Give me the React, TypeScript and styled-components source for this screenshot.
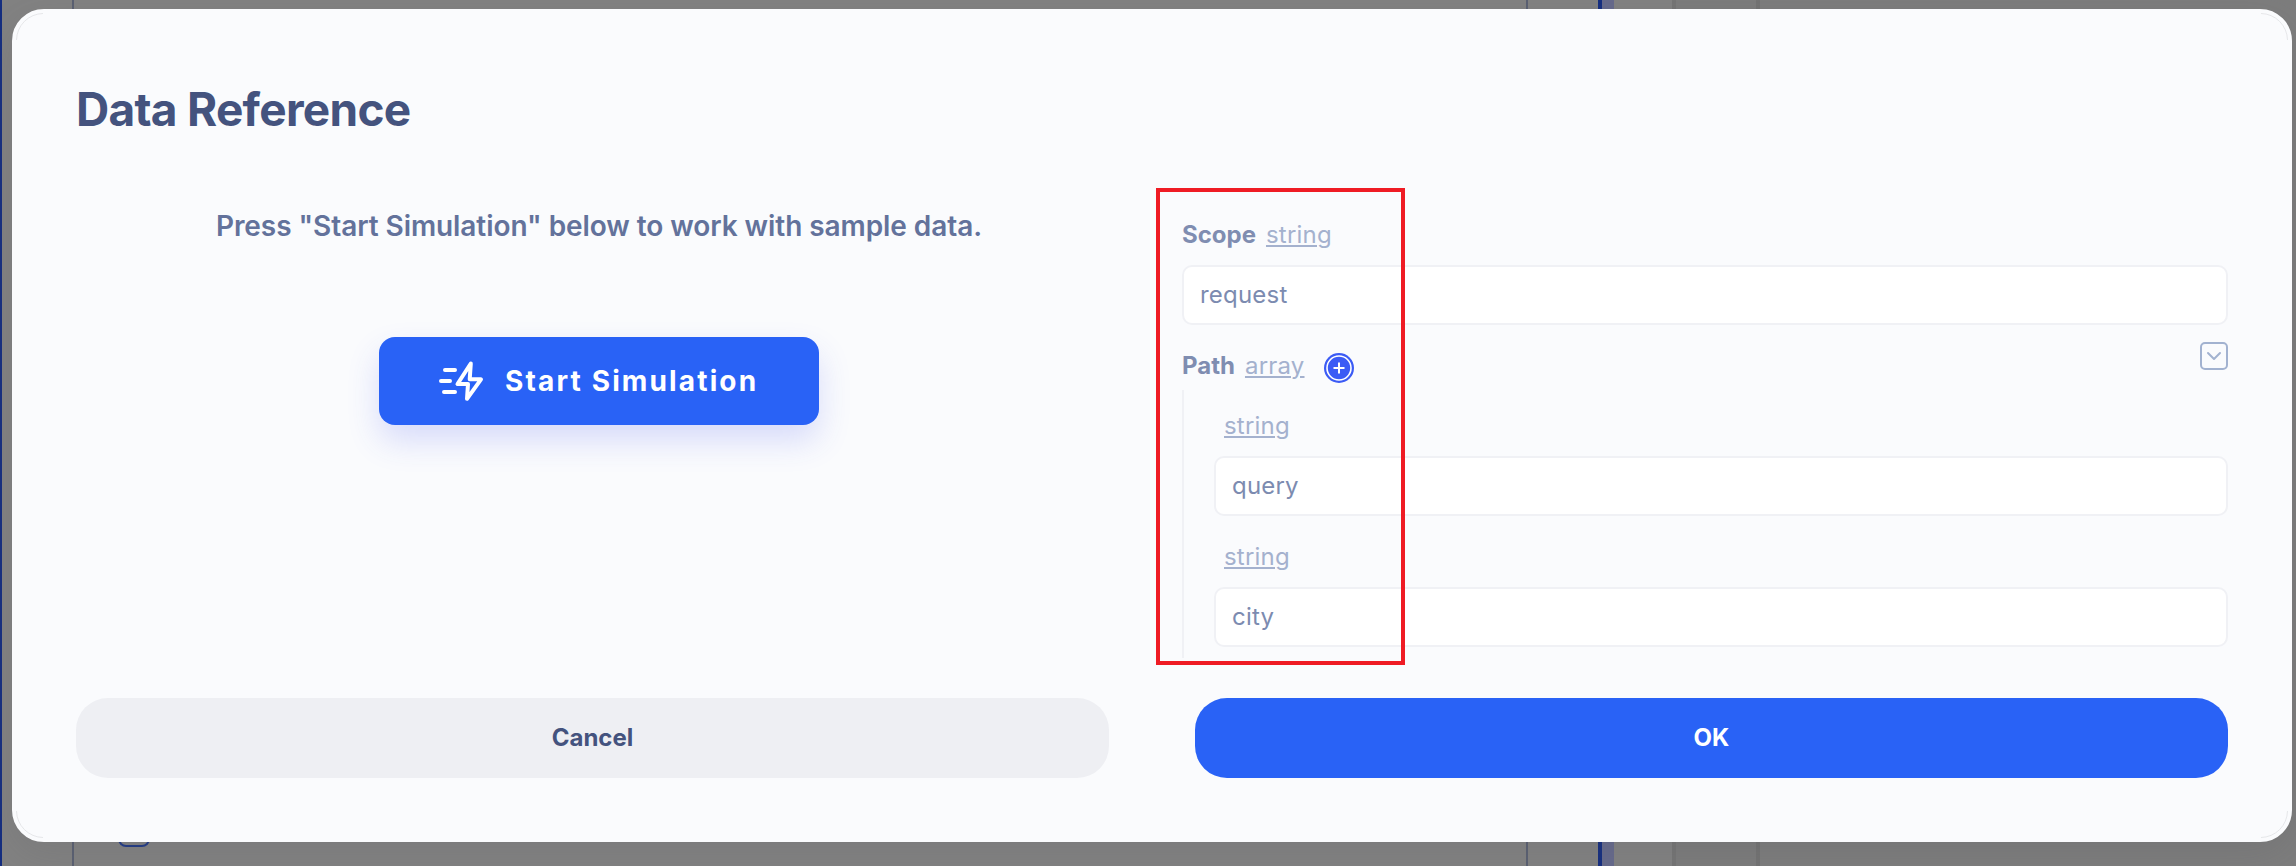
import React from "react";
import styled, { createGlobalStyle } from "styled-components";

const GlobalStyle = createGlobalStyle`
  *, *::before, *::after { box-sizing: border-box; }
  body { margin: 0; font-family: Inter, "Liberation Sans", sans-serif; }
  button { font-family: inherit; border: 0; cursor: pointer; }
`;

const Screen = styled.div`
  position: relative;
  width: 2296px;
  height: 866px;
  overflow: hidden;
`;

const Backdrop = styled.div`
  display: flex;
  height: 100%;
  background: #828282;
`;

const Strip = styled.div<{ $width: number; $color?: string }>`
  flex: none;
  width: ${(p) => p.$width}px;
  background: ${(p) => p.$color ?? "transparent"};
`;

const EditorPane = styled(Strip)`
  display: flex;
  align-items: flex-end;
  padding: 0 0 19px 44px;
`;

const BackdropCheckbox = styled.div`
  width: 32px;
  height: 32px;
  border: 2px solid #213a86;
  border-radius: 8px;
`;

const Modal = styled.div`
  position: absolute;
  top: 9px;
  left: 12px;
  width: 2280px;
  height: 833px;
  padding: 67px 60px 60px;
  display: flex;
  flex-direction: column;
  border: 4px solid #fafbfd;
  border-radius: 32px;
  background: #fafbfd;
  box-shadow: 0 12px 36px rgba(80, 80, 85, 0.15);
`;

const CornerLine = styled.svg`
  position: absolute;
  inset: 0;
  width: 100%;
  height: 100%;
  pointer-events: none;
`;

const Title = styled.h1`
  margin: 0;
  font-size: 46px;
  line-height: 59px;
  font-weight: 700;
  letter-spacing: -0.72px;
  color: #44537e;
`;

const Columns = styled.div`
  display: grid;
  grid-template-columns: 1fr 1fr;
  column-gap: 60px;
  height: 520px;
  margin-top: 39px;
`;

const SimulationPane = styled.section`
  display: flex;
  flex-direction: column;
  align-items: center;
  padding-top: 28px;
`;

const Hint = styled.p`
  margin: 0;
  font-size: 28px;
  line-height: 40px;
  font-weight: 600;
  letter-spacing: -0.07px;
  color: #63729b;
  white-space: nowrap;
`;

const StartButton = styled.button`
  display: flex;
  align-items: center;
  gap: 20px;
  width: 440px;
  height: 88px;
  margin-top: 91px;
  padding: 0 0 0 58px;
  border-radius: 16px;
  background: #2962f6;
  color: #fff;
  font-size: 28px;
  font-weight: 700;
  letter-spacing: 2.14px;
  white-space: nowrap;
  box-shadow: 0 16px 32px rgba(60, 80, 240, 0.18);
`;

const FormPane = styled.section`
  display: flex;
  flex-direction: column;
  padding-top: 39px;
`;

const Field = styled.div`
  display: flex;
  flex-direction: column;
  gap: 14px;

  & + & { margin-top: 23px; }
`;

const LabelRow = styled.div<{ $indent?: boolean }>`
  display: flex;
  align-items: center;
  height: 34px;
  padding-left: ${(p) => (p.$indent ? 10 : 0)}px;
  font-size: 24px;
  line-height: 36px;
`;

const Label = styled.span`
  margin-right: 10px;
  padding-top: 1px;
  font-weight: 700;
  color: #7f8db1;
`;

const TypeLink = styled.span`
  padding-top: 1px;
  letter-spacing: 0.2px;
  color: #a4b1ce;
  text-decoration: underline;
  text-decoration-thickness: 2px;
  text-underline-offset: 2px;
`;

const Input = styled.div`
  height: 60px;
  padding: 0 16px;
  border: 2px solid #f0f1f5;
  border-radius: 10px;
  background: #fff;
  color: #7c8bb0;
  font-size: 24px;
  line-height: 56px;
  letter-spacing: 0.2px;
`;

const PathRow = styled(LabelRow)`
  margin-top: 23px;
`;

const AddIcon = styled.svg`
  width: 30px;
  height: 30px;
  margin: 6px 0 0 19px;
`;

const CollapseIcon = styled.svg`
  width: 28px;
  height: 28px;
  margin: 0 0 18px auto;
`;

const PathItems = styled.div`
  height: 268px;
  margin-top: 8px;
  padding: 18px 0 0 30px;
  border-left: 2px solid #f0f1f5;
`;

const Footer = styled.footer`
  display: grid;
  grid-template-columns: 1fr 1fr;
  column-gap: 86px;
`;

const FooterButton = styled.button<{ $primary?: boolean }>`
  height: 80px;
  padding: 0 0 2px;
  border-radius: 32px;
  font-size: 24px;
  font-weight: 700;
  background: ${(p) => (p.$primary ? "#2962f6" : "#eeeff3")};
  color: ${(p) => (p.$primary ? "#fff" : "#44537e")};
`;

const Highlight = styled.div`
  position: absolute;
  left: 1156px;
  top: 188px;
  width: 249px;
  height: 477px;
  border: 4px solid #ef1b24;
  pointer-events: none;
`;

const BoltIcon = () => (
  <svg width="48" height="44" viewBox="0 0 48 44" fill="none" stroke="#fff" strokeWidth="4" strokeLinecap="round" strokeLinejoin="round">
    <path d="M8 11h10M4 22h9M7 33h11" />
    <path d="M33.800 4.500 20.500 25H31L30 39.800 44 20.300H32.700z" />
  </svg>
);

function TextField({ name, type, value }: { name?: string; type: string; value: string }) {
  return (
    <Field>
      <LabelRow $indent={!name}>
        {name && <Label>{name}</Label>}
        <TypeLink>{type}</TypeLink>
      </LabelRow>
      <Input>{value}</Input>
    </Field>
  );
}

export default function App() {
  return (
    <Screen>
      <GlobalStyle />
      <Backdrop>
        <Strip $width={2} $color="#152e80" />
        <Strip $width={70} />
        <Strip $width={2} $color="#5a6072" />
        <EditorPane $width={1452}>
          <BackdropCheckbox />
        </EditorPane>
        <Strip $width={2} $color="#5a6072" />
        <Strip $width={70} />
        <Strip $width={4} $color="#152e80" />
        <Strip $width={12} $color="#666a8c" />
        <Strip $width={58} />
        <Strip $width={4} $color="#757575" />
        <Strip $width={80} $color="#7c7c7c" />
        <Strip $width={4} $color="#737373" />
        <Strip $width={536} $color="#7d7d7d" />
      </Backdrop>
      <Modal>
        <CornerLine viewBox="0 0 2272 825" fill="none" stroke="#dddee1" strokeWidth="0.7">
          <path d="M.5 27A27 27 0 0 1 27 .5M2245 .5A27 27 0 0 1 2271.500 27M2271.500 798A27 27 0 0 1 2245 824.500M27 824.500A27 27 0 0 1 .5 798" />
        </CornerLine>
        <Title>Data Reference</Title>
        <Columns>
          <SimulationPane>
            <Hint>Press "Start Simulation" below to work with sample data.</Hint>
            <StartButton>
              <BoltIcon />
              Start Simulation
            </StartButton>
          </SimulationPane>
          <FormPane>
            <TextField name="Scope" type="string" value="request" />
            <PathRow>
              <Label>Path</Label>
              <TypeLink>array</TypeLink>
              <AddIcon viewBox="0 0 30 30" fill="none">
                <circle cx="15" cy="15" r="15" fill="#3b5bf5" />
                <circle cx="15" cy="15" r="12" stroke="#fff" strokeWidth="1.6" />
                <path d="M15 9.500v11M9.500 15h11" stroke="#fff" strokeWidth="2" />
              </AddIcon>
              <CollapseIcon viewBox="0 0 28 28" fill="none" stroke="#a2b2d0" strokeWidth="2" strokeLinecap="round" strokeLinejoin="round">
                <rect x="1" y="1" width="26" height="26" rx="4" />
                <path d="M8 11l6 6 6-6" />
              </CollapseIcon>
            </PathRow>
            <PathItems>
              <TextField type="string" value="query" />
              <TextField type="string" value="city" />
            </PathItems>
          </FormPane>
        </Columns>
        <Footer>
          <FooterButton>Cancel</FooterButton>
          <FooterButton $primary>OK</FooterButton>
        </Footer>
      </Modal>
      <Highlight />
    </Screen>
  );
}
